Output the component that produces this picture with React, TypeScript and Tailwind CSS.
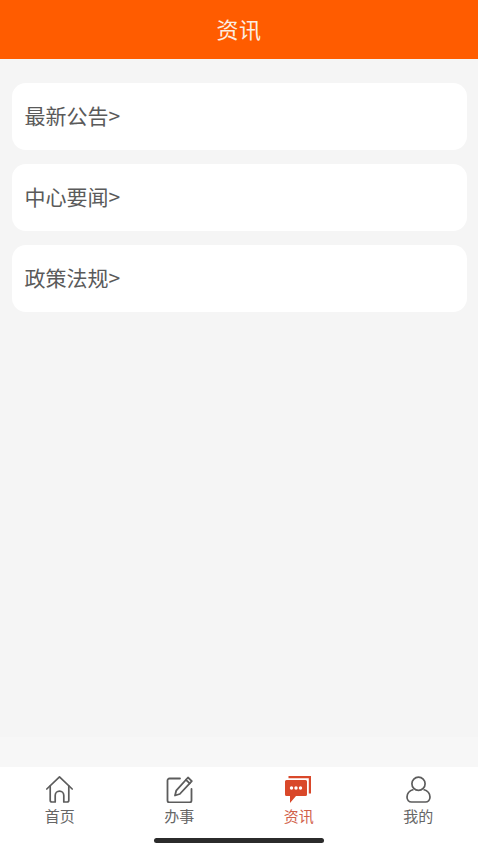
export default function App() {
  const cjk = "font-['Noto_Sans_CJK_SC','Noto_Sans',sans-serif]";
  const label = "mt-[4px] text-[15px] leading-[18px]";
  return (
    <div className={`w-[478px] h-[850px] flex flex-col bg-[#f5f5f5] overflow-hidden ${cjk}`}>
      <header className="h-[59px] shrink-0 bg-[#ff5c00] flex items-center justify-center pb-[4px]">
        <span className="text-[22px] leading-none text-[#fbeee2] tracking-[0.5px]">资讯</span>
      </header>
      <main className="flex-1 flex flex-col gap-[14px] pl-3 pr-[11px] pt-6">
        {["最新公告>", "中心要闻>", "政策法规>"].map((t) => (
          <div key={t} className="h-[67px] bg-white rounded-[14px] flex items-center pl-[12.5px] pb-[2px] text-[21px] text-[#5a5a5a]">
            {t}
          </div>
        ))}
      </main>
      <div className="h-[30px] shrink-0 bg-[#f7f7f7]" />
      <nav className="h-[83px] shrink-0 bg-white relative grid grid-cols-4">
        <div className="flex flex-col items-center pt-[9px]">
          <svg width="27" height="27" viewBox="0 0 27 27" fill="none" stroke="#5c5c5c" strokeWidth="1.7" strokeLinejoin="round" strokeLinecap="round">
            <path d="M0.8 13 13.5 0.9 26.2 13" />
            <path d="M4.2 10v14.2a1.8 1.8 0 0 0 1.800 1.800h3.200v-6.500a4.300 4.300 0 0 1 8.600 0V26h3.200a1.800 1.800 0 0 0 1.800-1.800V10" />
          </svg>
          <span className={`${label} text-[#666]`}>首页</span>
        </div>
        <div className="flex flex-col items-center pt-[9px]">
          <svg width="27" height="27" viewBox="0 0 27 27" fill="none" stroke="#5c5c5c" strokeWidth="1.8" strokeLinejoin="round" strokeLinecap="round">
            <path d="M14 2.500H3.500A2 2 0 0 0 1.500 4.500v20a2 2 0 0 0 2 2h20a2 2 0 0 0 2-2V13" />
            <path d="M9 19.500l1.200-4.800L22 1.500l3.800 3.600L13.800 18z" />
            <path d="M20 3.800l3.700 3.600" />
          </svg>
          <span className={`${label} text-[#666]`}>办事</span>
        </div>
        <div className="flex flex-col items-center pt-[9px]">
          <svg width="27" height="27" viewBox="0 0 27 27">
            <path d="M3.500 0H26v17.500h-2.200V2.200H3.500z" fill="#d9482a" />
            <path d="M1.500 4h19a1.500 1.500 0 0 1 1.500 1.500v13a1.500 1.500 0 0 1-1.500 1.500H11l-6 7v-7H1.500A1.500 1.500 0 0 1 0 18.500v-13A1.500 1.500 0 0 1 1.500 4z" fill="#d9482a" />
            <circle cx="6.500" cy="12" r="1.700" fill="#fff" />
            <circle cx="11" cy="12" r="1.700" fill="#fff" />
            <circle cx="15.500" cy="12" r="1.700" fill="#fff" />
          </svg>
          <span className={`${label} text-[#d0604a]`}>资讯</span>
        </div>
        <div className="flex flex-col items-center pt-[9px]">
          <svg width="27" height="27" viewBox="0 0 27 27" fill="none" stroke="#5c5c5c" strokeWidth="1.7">
            <circle cx="13.500" cy="7.800" r="6.600" />
            <path d="M8.500 13.500c-3.800 1.200-6.500 4-6.500 7.500 0 3 2 5 4.500 5h14c2.500 0 4.500-2 4.500-5 0-3.500-2.700-6.300-6.500-7.500" />
          </svg>
          <span className={`${label} text-[#666]`}>我的</span>
        </div>
        <div className="absolute left-[154px] bottom-[7px] w-[170px] h-[5px] rounded-full bg-[#2b2b2b]" />
      </nav>
    </div>
  );
}
